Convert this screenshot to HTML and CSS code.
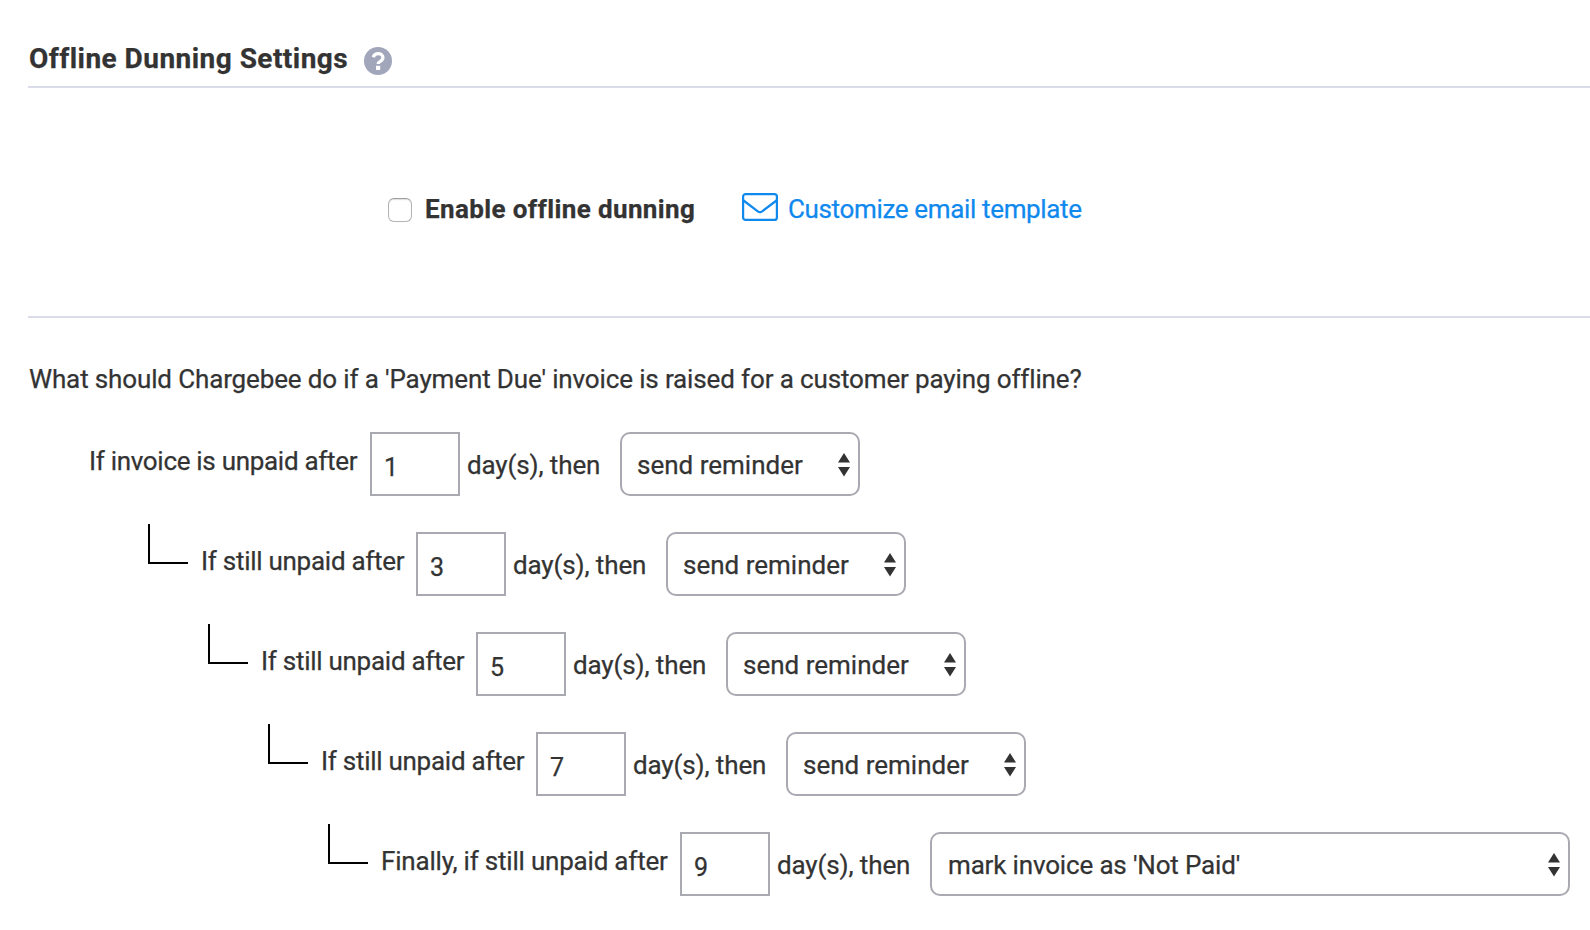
FILE: index.html
```html
<!DOCTYPE html>
<html lang="en">
<head>
<meta charset="utf-8">
<title>Offline Dunning Settings</title>
<link rel="stylesheet" href="styles.css">
</head>
<body>
<main class="page">
  <header class="header">
    <h1 class="title">Offline Dunning Settings</h1>
    <svg class="help" viewBox="0 0 28 28" width="28" height="28">
      <circle cx="14" cy="14" r="14" fill="#a2a6bb"/>
      <path d="M9.200 10.200C10 7.900 11.700 6.700 14.100 6.700c2.800 0 4.800 1.500 4.800 3.900 0 1.800-.9 2.700-2.300 3.500-1.600.9-2.400 1.400-2.400 3" fill="none" stroke="#fff" stroke-width="3.300"/>
      <rect x="12" y="18.800" width="4.200" height="4.200" fill="#fff"/>
    </svg>
  </header>
  <section class="enable">
    <label class="enable-label"><input class="checkbox" type="checkbox"><span>Enable offline dunning</span></label>
    <a class="link">
      <svg class="mail" viewBox="0 0 36 28" width="36" height="28" fill="none" stroke="#1089ee" stroke-width="2.200">
        <rect x="1.100" y="1.100" width="33.800" height="25.800" rx="2.500"/>
        <path d="M1.500 7.500 15.800 18.300q2.200 1.600 4.400 0L34.500 7.500"/>
      </svg>
      <span class="link-text">Customize email template</span>
    </a>
  </section>
  <section class="rules">
    <p class="question">What should Chargebee do if a 'Payment Due' invoice is raised for a customer paying offline?</p>
    <div class="rule level-0">
      <span class="label label-first">If invoice is unpaid after</span>
      <input class="days" type="text" value="1">
      <span class="then">day(s), then</span>
      <span class="select-wrap"><select class="select"><option>send reminder</option></select><svg class="arrows" viewBox="0 0 12 24" width="12" height="24"><path d="M6 0l6 9.500H0zM0 14h12L6 23.500z" fill="#333"/></svg></span>
    </div>
    <div class="rule level-1">
      <span class="elbow"></span>
      <span class="label label-still">If still unpaid after</span>
      <input class="days" type="text" value="3">
      <span class="then">day(s), then</span>
      <span class="select-wrap"><select class="select"><option>send reminder</option></select><svg class="arrows" viewBox="0 0 12 24" width="12" height="24"><path d="M6 0l6 9.500H0zM0 14h12L6 23.500z" fill="#333"/></svg></span>
    </div>
    <div class="rule level-2">
      <span class="elbow"></span>
      <span class="label label-still">If still unpaid after</span>
      <input class="days" type="text" value="5">
      <span class="then">day(s), then</span>
      <span class="select-wrap"><select class="select"><option>send reminder</option></select><svg class="arrows" viewBox="0 0 12 24" width="12" height="24"><path d="M6 0l6 9.500H0zM0 14h12L6 23.500z" fill="#333"/></svg></span>
    </div>
    <div class="rule level-3">
      <span class="elbow"></span>
      <span class="label label-still">If still unpaid after</span>
      <input class="days" type="text" value="7">
      <span class="then">day(s), then</span>
      <span class="select-wrap"><select class="select"><option>send reminder</option></select><svg class="arrows" viewBox="0 0 12 24" width="12" height="24"><path d="M6 0l6 9.500H0zM0 14h12L6 23.500z" fill="#333"/></svg></span>
    </div>
    <div class="rule level-4">
      <span class="elbow"></span>
      <span class="label label-final">Finally, if still unpaid after</span>
      <input class="days" type="text" value="9">
      <span class="then">day(s), then</span>
      <span class="select-wrap wide"><select class="select select-final"><option>mark invoice as 'Not Paid'</option></select><svg class="arrows" viewBox="0 0 12 24" width="12" height="24"><path d="M6 0l6 9.500H0zM0 14h12L6 23.500z" fill="#333"/></svg></span>
    </div>
  </section>
</main>
</body>
</html>
```

FILE: styles.css
```css
* {
  box-sizing: border-box;
}

body {
  margin: 0;
  background: #fff;
  color: #333;
  font: 26px/32px Roboto, "Liberation Sans", sans-serif;
  -webkit-text-stroke: 0.25px currentColor;
  overflow: hidden;
}

.page {
  height: 930px;
  padding-left: 28px;
}

.header {
  display: flex;
  align-items: flex-start;
  height: 88px;
  padding-top: 43px;
  border-bottom: 2px solid #dadde9;
}

.title {
  width: 336px;
  margin: 0;
  padding-left: 1px;
  font-size: 28px;
  font-weight: 700;
  line-height: 32px;
  letter-spacing: 0.46px;
  white-space: nowrap;
}

.help {
  margin-top: 4px;
}

.enable {
  display: flex;
  align-items: flex-start;
  height: 230px;
  padding: 105px 0 0 360px;
  border-bottom: 2px solid #dadde9;
}

.enable-label {
  display: flex;
  width: 354px;
  font-weight: 700;
  letter-spacing: 0.38px;
  white-space: nowrap;
}

.checkbox {
  appearance: none;
  width: 24px;
  height: 24px;
  margin: 5px 13px 0 0;
  border: 1px solid #b4b4b4;
  border-top-color: #9c9c9c;
  border-radius: 6px;
  background: #fff;
  box-shadow: inset 0 1px 1px #dedede;
}

.link {
  display: flex;
  gap: 10px;
  color: #1089ee;
  white-space: nowrap;
}

.link-text {
  letter-spacing: -0.35px;
}

.question {
  margin: 0;
  padding: 45px 0 0 1px;
  height: 114px;
  letter-spacing: -0.135px;
  white-space: nowrap;
}

.rule {
  display: flex;
  align-items: flex-start;
  height: 64px;
  margin-bottom: 36px;
  white-space: nowrap;
}

.level-0 { padding-left: 60px; }
.level-1 { padding-left: 120px; }
.level-2 { padding-left: 180px; }
.level-3 { padding-left: 240px; }
.level-4 { padding-left: 300px; }

.elbow {
  flex: none;
  width: 40px;
  height: 40px;
  margin: -8px 12px 0 0;
  border-left: 2px solid #000;
  border-bottom: 2px solid #000;
}

.label {
  flex: none;
  padding: 13px 0 0 1px;
}

.label-first {
  width: 282px;
  letter-spacing: -0.3px;
}

.label-still {
  width: 216px;
  letter-spacing: -0.27px;
}

.label-final {
  width: 300px;
  letter-spacing: -0.2px;
}

.days {
  flex: none;
  width: 90px;
  height: 64px;
  margin: 0;
  padding: 7px 12px 0;
  border: 2px solid #a9a9b1;
  border-radius: 0;
  background: #fff;
  color: #333;
  font: 25px Roboto, "Liberation Sans", sans-serif;
}

.then {
  flex: none;
  width: 160px;
  padding: 17px 0 0 7px;
  letter-spacing: -0.13px;
}

.select-wrap {
  position: relative;
  flex: none;
  width: 240px;
  height: 64px;
}

.select-wrap.wide {
  width: 640px;
}

.select {
  appearance: none;
  display: block;
  width: 100%;
  height: 64px;
  margin: 0;
  padding: 2px 16px 0 15px;
  border: 2px solid #a9a9b1;
  border-radius: 10px;
  background: #fff;
  color: #333;
  font: 26px Roboto, "Liberation Sans", sans-serif;
}

.select-final {
  padding-left: 16px;
  letter-spacing: -0.16px;
}

.arrows {
  position: absolute;
  top: 20.5px;
  right: 10px;
}
```
